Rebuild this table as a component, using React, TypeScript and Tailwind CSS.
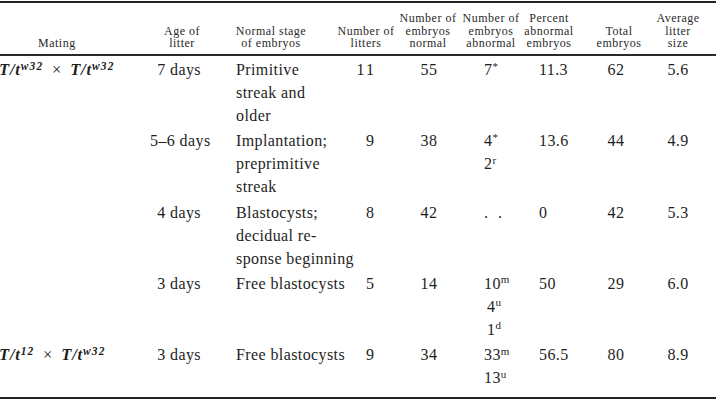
const grid =
  'grid grid-cols-[150px_64px_118px_68px_58px_64px_64px_66px_52px]';

type Row = {
  mating?: JSX.Element;
  age: string;
  stage: string[];
  litters: string;
  normal: string;
  abnormal: [string, string][] | null;
  percent: string;
  total: string;
  avg: string;
};

const Genotype = ({ sup }: { sup: string }) => (
  <span className="italic font-semibold tracking-[0.8px]">
    T/t<sup className="text-[11.5px] tracking-[1.2px] top-[-0.4em]">{sup}</sup>
  </span>
);

const rows: Row[] = [
  {
    mating: (
      <>
        <Genotype sup="w32" /> <span className="mx-[4px]">×</span> <Genotype sup="w32" />
      </>
    ),
    age: '7 days',
    stage: ['Primitive', 'streak and', 'older'],
    litters: '11',
    normal: '55',
    abnormal: [['7', '*']],
    percent: '11.3',
    total: '62',
    avg: '5.6',
  },
  {
    age: '5–6 days',
    stage: ['Implantation;', 'preprimitive', 'streak'],
    litters: '9',
    normal: '38',
    abnormal: [
      ['4', '*'],
      ['2', 'r'],
    ],
    percent: '13.6',
    total: '44',
    avg: '4.9',
  },
  {
    age: '4 days',
    stage: ['Blastocysts;', 'decidual re-', 'sponse beginning'],
    litters: '8',
    normal: '42',
    abnormal: null,
    percent: '0',
    total: '42',
    avg: '5.3',
  },
  {
    age: '3 days',
    stage: ['Free blastocysts'],
    litters: '5',
    normal: '14',
    abnormal: [
      ['10', 'm'],
      ['4', 'u'],
      ['1', 'd'],
    ],
    percent: '50',
    total: '29',
    avg: '6.0',
  },
  {
    mating: (
      <>
        <Genotype sup="12" /> <span className="mx-[4px]">×</span> <Genotype sup="w32" />
      </>
    ),
    age: '3 days',
    stage: ['Free blastocysts'],
    litters: '9',
    normal: '34',
    abnormal: [
      ['33', 'm'],
      ['13', 'u'],
    ],
    percent: '56.5',
    total: '80',
    avg: '8.9',
  },
];

// header cell: lines stacked, centred on the column
const Head = ({ lines, className = '' }: { lines: string[]; className?: string }) => (
  <div className={`flex flex-col items-center justify-end whitespace-nowrap ${className}`}>
    {lines.map((l) => (
      <span key={l}>{l}</span>
    ))}
  </div>
);

export default function App() {
  return (
    <div className="w-[716px] h-[402px] bg-white overflow-hidden text-[#1e1e1e] [font-family:'Liberation_Serif','Times_New_Roman',serif]">
      {/* top rule */}
      <div className="mt-[1px] h-[2px] bg-[#222]" />

      {/* column heads */}
      <div className={`${grid} pt-[9px] pb-[4px] text-[12px] tracking-[0.5px] leading-[12.5px] text-[#2a2a2a]`}>
        <div className="flex items-end pl-[38px]">Mating</div>
        <Head lines={['Age of', 'litter']} />
        <Head lines={['Normal stage', 'of embryos']} className="pr-[4px]" />
        <Head lines={['Number of', 'litters']} />
        <Head lines={['Number of', 'embryos', 'normal']} className="pr-[2px]" />
        <Head lines={['Number of', 'embryos', 'abnormal']} className="pl-[2px]" />
        <Head lines={['Percent', 'abnormal', 'embryos']} className="pr-[10px]" />
        <Head lines={['Total', 'embryos']} />
        <Head lines={['Average', 'litter', 'size']} />
      </div>

      <div className="h-[2px] bg-[#2a2a2a]" />

      {/* body */}
      <div className="flex flex-col gap-y-[2.25px] pt-[2.5px] h-[341px] text-[16px] tracking-[0.4px] leading-[23px]">
        {rows.map((r, i) => (
          <div key={i} className={`${grid} items-start`}>
            <div className="whitespace-nowrap -ml-[1px] text-[16.5px]">{r.mating}</div>
            <div className="text-right pr-[13px] whitespace-nowrap">{r.age}</div>
            <div className="pl-[22px] whitespace-nowrap flex flex-col">
              {r.stage.map((s) => (
                <span key={s}>{s}</span>
              ))}
            </div>
            <div className="text-right pr-[24px] tracking-[2px]">{r.litters}</div>
            <div className="text-center">{r.normal}</div>
            <div className="pl-[26px] flex flex-col whitespace-nowrap">
              {r.abnormal ? (
                r.abnormal.map(([n, s], j) => (
                  <span key={j} className={n.length === 1 && j > 0 && s !== 'r' ? 'pl-[3px]' : ''}>
                    {n}
                    <sup className="text-[11px]">{s}</sup>
                  </span>
                ))
              ) : (
                <span className="tracking-[3px]">. .</span>
              )}
            </div>
            <div className="pl-[17px]">{r.percent}</div>
            <div className="text-center pr-[6px]">{r.total}</div>
            <div className="text-center">{r.avg}</div>
          </div>
        ))}
      </div>

      {/* bottom rule */}
      <div className="h-[2px] bg-[#222]" />
    </div>
  );
}
